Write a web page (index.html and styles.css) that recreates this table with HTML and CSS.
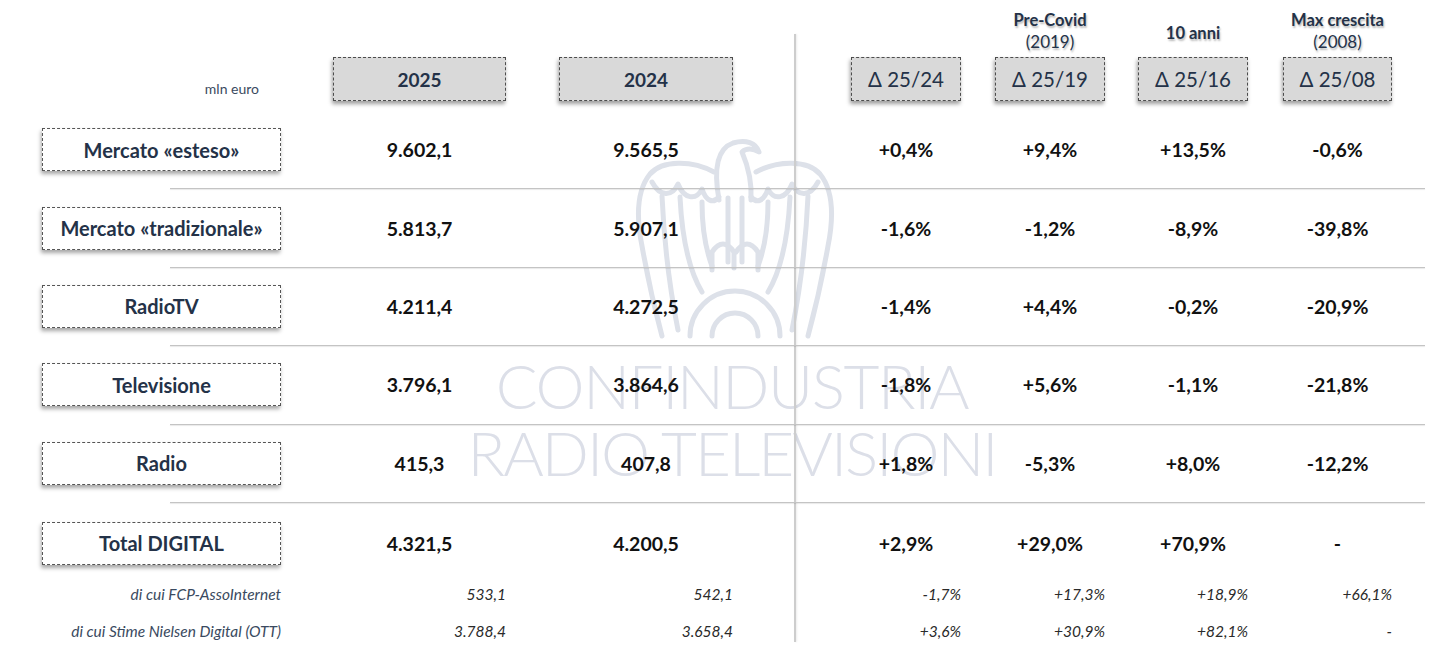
FILE: index.html
```html
<!DOCTYPE html>
<html lang="it">
<head>
<meta charset="utf-8">
<title>Mercato pubblicitario</title>
<link rel="stylesheet" href="styles.css">
</head>
<body>
<div class="page">
  <div class="watermark" aria-hidden="true">
    <svg class="eagle" viewBox="630 135 210 205" width="210" height="205">
      <g fill="none" stroke="#dde1e9" stroke-width="5" stroke-linecap="round" stroke-linejoin="round">
        <path d="M719 200 C714 172 716 149 733 143 C746 139 756 143 759 152 C753 148 746 148 742 152 C748 166 752 183 751 200"/>
        <path d="M728 198 V262 M742 198 V262"/>
        <path d="M714 172 C692 160 662 160 650 174 C637 190 636 216 642 246 C648 280 655 310 662 336"/>
        <path d="M756 172 C778 160 808 160 820 174 C833 190 834 216 828 246 C822 280 815 310 808 336"/>
        <path d="M652 182 C660 197 672 197 678 184 C684 199 696 201 702 189 C706 201 713 204 719 197"/>
        <path d="M818 182 C810 197 798 197 792 184 C786 199 774 201 768 189 C764 201 757 204 751 197"/>
        <path d="M662 196 C664 240 670 290 678 330 M680 197 C682 238 690 272 702 292 M702 202 C702 230 706 250 712 266"/>
        <path d="M808 196 C806 240 800 290 792 330 M790 197 C788 238 780 272 768 292 M768 202 C768 230 764 250 758 266"/>
        <path d="M712 270 V252 Q723 236 734 252 V268 M736 252 Q747 236 758 252 V270"/>
        <path d="M690 336 A45 45 0 0 1 780 336"/>
        <path d="M712 336 A23 23 0 0 1 758 336"/>
      </g>
    </svg>
    <div class="wm-text">
      <span class="wm1">CONFINDUSTRIA</span>
      <span class="wm2">RADIO TELEVISIONI</span>
    </div>
  </div>

  <div class="table">
    <div class="divider"></div>

    <div class="row row-top">
      <div class="toplabel d2"><b>Pre-Covid</b><span>(2019)</span></div>
      <div class="toplabel d3 single"><b>10 anni</b></div>
      <div class="toplabel d4"><b>Max crescita</b><span>(2008)</span></div>
    </div>

    <div class="row row-head">
      <div class="unit cl">mln euro</div>
      <div class="hbox year c25">2025</div>
      <div class="hbox year c24">2024</div>
      <div class="hbox delta d1">Δ 25/24</div>
      <div class="hbox delta d2">Δ 25/19</div>
      <div class="hbox delta d3">Δ 25/16</div>
      <div class="hbox delta d4">Δ 25/08</div>
    </div>

    <div class="row r1">
      <div class="lbox cl">Mercato «esteso»</div>
      <div class="val c25">9.602,1</div>
      <div class="val c24">9.565,5</div>
      <div class="val d1">+0,4%</div>
      <div class="val d2">+9,4%</div>
      <div class="val d3">+13,5%</div>
      <div class="val d4">-0,6%</div>
    </div>
    <div class="hline l1"></div>

    <div class="row r2">
      <div class="lbox cl">Mercato «tradizionale»</div>
      <div class="val c25">5.813,7</div>
      <div class="val c24">5.907,1</div>
      <div class="val d1">-1,6%</div>
      <div class="val d2">-1,2%</div>
      <div class="val d3">-8,9%</div>
      <div class="val d4">-39,8%</div>
    </div>
    <div class="hline l2"></div>

    <div class="row r3">
      <div class="lbox cl">RadioTV</div>
      <div class="val c25">4.211,4</div>
      <div class="val c24">4.272,5</div>
      <div class="val d1">-1,4%</div>
      <div class="val d2">+4,4%</div>
      <div class="val d3">-0,2%</div>
      <div class="val d4">-20,9%</div>
    </div>
    <div class="hline l3"></div>

    <div class="row r4">
      <div class="lbox cl">Televisione</div>
      <div class="val c25">3.796,1</div>
      <div class="val c24">3.864,6</div>
      <div class="val d1">-1,8%</div>
      <div class="val d2">+5,6%</div>
      <div class="val d3">-1,1%</div>
      <div class="val d4">-21,8%</div>
    </div>
    <div class="hline l4"></div>

    <div class="row r5">
      <div class="lbox cl">Radio</div>
      <div class="val c25">415,3</div>
      <div class="val c24">407,8</div>
      <div class="val d1">+1,8%</div>
      <div class="val d2">-5,3%</div>
      <div class="val d3">+8,0%</div>
      <div class="val d4">-12,2%</div>
    </div>
    <div class="hline l5"></div>

    <div class="row r6">
      <div class="lbox cl">Total DIGITAL</div>
      <div class="val c25">4.321,5</div>
      <div class="val c24">4.200,5</div>
      <div class="val d1">+2,9%</div>
      <div class="val d2">+29,0%</div>
      <div class="val d3">+70,9%</div>
      <div class="val d4">-</div>
    </div>

    <div class="row sub s1">
      <div class="sublabel cl">di cui FCP-AssoInternet</div>
      <div class="subval c25">533,1</div>
      <div class="subval c24">542,1</div>
      <div class="subval d1">-1,7%</div>
      <div class="subval d2">+17,3%</div>
      <div class="subval d3">+18,9%</div>
      <div class="subval d4">+66,1%</div>
    </div>

    <div class="row sub s2">
      <div class="sublabel cl">di cui Stime Nielsen Digital (OTT)</div>
      <div class="subval c25">3.788,4</div>
      <div class="subval c24">3.658,4</div>
      <div class="subval d1">+3,6%</div>
      <div class="subval d2">+30,9%</div>
      <div class="subval d3">+82,1%</div>
      <div class="subval d4">-</div>
    </div>
  </div>
</div>
</body>
</html>
```

FILE: styles.css
```css
html, body {
  margin: 0;
  padding: 0;
  background: #ffffff;
}

body {
  font-family: Lato, "Open Sans", "Liberation Sans", sans-serif;
  color: #111;
}

.page {
  position: relative;
  width: 1438px;
  height: 657px;
  overflow: hidden;
}

/* ---------- watermark (sits under the table) ---------- */
.watermark {
  position: absolute;
  inset: 0;
  z-index: 0;
}

.eagle {
  position: absolute;
  left: 630px;
  top: 135px;
}

.wm-text {
  position: absolute;
  left: 432px;
  top: 352px;
  width: 600px;
  display: flex;
  flex-direction: column;
  align-items: center;
  font-family: Lato, "Open Sans", sans-serif;
  font-weight: 300;
  color: #dcdfe8;
  font-size: 62px;
  line-height: 67px;
}
.wm1 { letter-spacing: -1.4px; }
.wm2 { letter-spacing: -2px; }

/* ---------- table grid ---------- */
.table {
  position: relative;
  z-index: 1;
  display: grid;
  grid-template-columns:
    42px 239px 52px 173px 53px 174px 61px 2px 55px
    110px 34px 110px 33px 110px 35px 109px 46px;
  grid-template-rows:
    57px 44px 10px
    77.4px 1px 77.4px 1px 77.4px 1px 77.4px 1px 77.4px 1px
    79px 24px 50px;
}

.row { display: contents; }

.row-top > * { grid-row: 1; }
.row-head > * { grid-row: 2; }
.r1 > * { grid-row: 4; }
.r2 > * { grid-row: 6; }
.r3 > * { grid-row: 8; }
.r4 > * { grid-row: 10; }
.r5 > * { grid-row: 12; }
.r6 > * { grid-row: 14; }
.s1 > * { grid-row: 15; }
.s2 > * { grid-row: 16; }

.cl { grid-column: 2; }
.c25 { grid-column: 4; }
.c24 { grid-column: 6; }
.d1 { grid-column: 10; }
.d2 { grid-column: 12; }
.d3 { grid-column: 14; }
.d4 { grid-column: 16; }

.divider {
  grid-column: 8;
  grid-row: 1 / -1;
  margin: 34px 0 14px;
  background: #cdcdcd;
  box-shadow: 1px 0 2px rgba(0, 0, 0, 0.08);
}

.hline {
  grid-column: 1 / -1;
  margin: 0 13px 0 170px;
  background: #c4c4c4;
  box-shadow: 0 1px 1px rgba(0, 0, 0, 0.10);
}
.l1 { grid-row: 5; }
.l2 { grid-row: 7; }
.l3 { grid-row: 9; }
.l4 { grid-row: 11; }
.l5 { grid-row: 13; }

/* ---------- top labels ---------- */
.toplabel {
  display: flex;
  flex-direction: column;
  align-items: center;
  justify-content: flex-end;
  padding-bottom: 4px;
  color: #243248;
  font-size: 16.5px;
  line-height: 22px;
  text-shadow: 1px 2px 2px rgba(0, 0, 0, 0.28);
  margin: 0 -20px;
  white-space: nowrap;
}
.toplabel b { font-weight: 700; }
.toplabel span { font-weight: 400; font-size: 17px; }
.toplabel.single { padding-bottom: 13px; }

/* ---------- header boxes ---------- */
.unit {
  align-self: end;
  justify-self: end;
  margin: 0 22px 4px 0;
  font-size: 14px;
  color: #3a4a60;
}

.hbox {
  display: flex;
  align-items: center;
  justify-content: center;
  background: #d9d9d9;
  border: 1px dashed #4d4d4d;
  box-shadow: -1px 3px 4px rgba(0, 0, 0, 0.38);
  color: #243248;
}
.hbox.year {
  font-size: 19px;
  font-weight: 700;
}
.hbox.delta {
  font-size: 20.5px;
  font-weight: 400;
}

/* ---------- row label boxes ---------- */
.lbox {
  align-self: center;
  height: 43px;
  box-sizing: border-box;
  display: flex;
  align-items: center;
  justify-content: center;
  background: #ffffff;
  border: 1px dashed #555;
  box-shadow: -1px 3px 4px rgba(0, 0, 0, 0.35);
  color: #243248;
  font-size: 20px;
  font-weight: 700;
  white-space: nowrap;
}

.val {
  align-self: center;
  justify-self: center;
  font-size: 19.5px;
  font-weight: 700;
  color: #111;
}
.r6 > .val, .r6 > .lbox { margin-top: 2px; }

/* ---------- sub rows ---------- */
.sublabel, .subval {
  align-self: center;
  text-align: right;
  font-style: italic;
  font-size: 15.5px;
  white-space: nowrap;
}
.sublabel { color: #3a4a60; justify-self: end; }
.subval { color: #2a2a2a; }
.s2 > * { align-self: start; margin-top: 16px; }
```
